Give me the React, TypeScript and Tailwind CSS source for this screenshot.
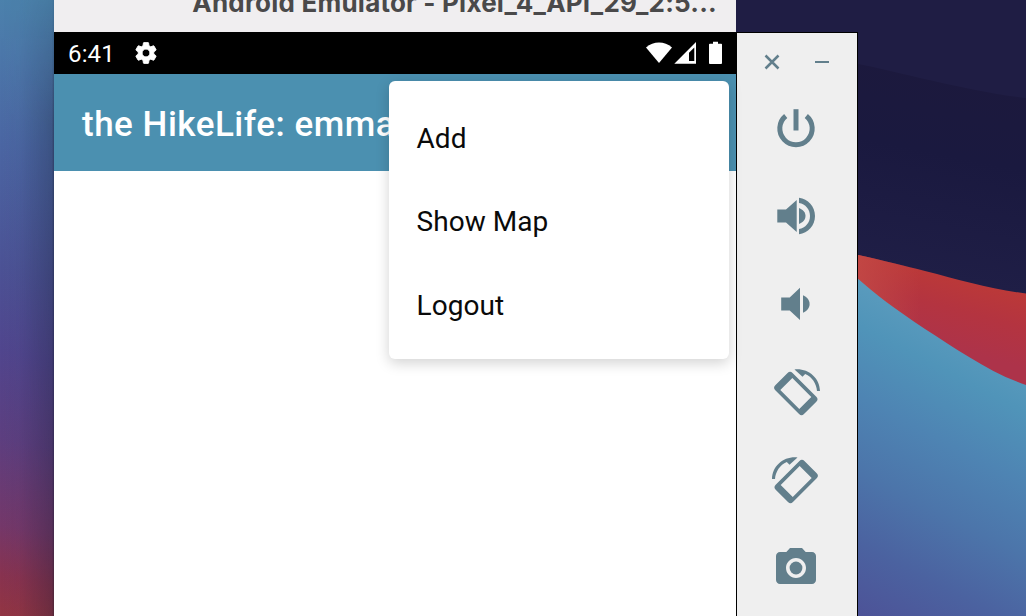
import React from "react";

function Wallpaper() {
  return (
    <svg className="absolute inset-0 h-full w-full" viewBox="0 0 1026 616" preserveAspectRatio="none" aria-hidden="true">
      <defs>
        <linearGradient id="left" gradientUnits="userSpaceOnUse" x1="60" y1="0" x2="-60" y2="600">
          <stop offset="0" stopColor="#4b83ac" />
          <stop offset="0.1" stopColor="#4c78aa" />
          <stop offset="0.25" stopColor="#4b66a3" />
          <stop offset="0.45" stopColor="#4c5295" />
          <stop offset="0.58" stopColor="#51468e" />
          <stop offset="0.72" stopColor="#5d3f80" />
          <stop offset="0.86" stopColor="#74386a" />
          <stop offset="0.94" stopColor="#883350" />
          <stop offset="1" stopColor="#923544" />
        </linearGradient>
        <linearGradient id="edge" x1="0" y1="0" x2="1" y2="0">
          <stop offset="0" stopColor="#101828" stopOpacity="0" />
          <stop offset="0.35" stopColor="#101828" stopOpacity="0.03" />
          <stop offset="0.96" stopColor="#101828" stopOpacity="0.27" />
          <stop offset="1" stopColor="#101828" stopOpacity="0.5" />
        </linearGradient>
        <linearGradient id="edgeTop" x1="0" y1="0" x2="0" y2="1">
          <stop offset="0" stopColor="#fff" stopOpacity="0.3" />
          <stop offset="0.2" stopColor="#fff" stopOpacity="0.95" />
          <stop offset="1" stopColor="#fff" />
        </linearGradient>
        <mask id="edgeMask">
          <rect width="54" height="616" fill="url(#edgeTop)" />
        </mask>
        <linearGradient id="navy" gradientUnits="userSpaceOnUse" x1="890" y1="60" x2="850" y2="260">
          <stop offset="0" stopColor="#1c193d" />
          <stop offset="0.4" stopColor="#1a193f" />
          <stop offset="1" stopColor="#1f1e46" />
        </linearGradient>
        <linearGradient id="red" gradientUnits="userSpaceOnUse" x1="955" y1="268" x2="935" y2="345">
          <stop offset="0" stopColor="#bd3a36" />
          <stop offset="0.5" stopColor="#b43440" />
          <stop offset="1" stopColor="#ad334a" />
        </linearGradient>
        <linearGradient id="redFade" gradientUnits="userSpaceOnUse" x1="858" y1="0" x2="920" y2="0">
          <stop offset="0" stopColor="#c44a46" stopOpacity="0.8" />
          <stop offset="1" stopColor="#c44a46" stopOpacity="0" />
        </linearGradient>
        <linearGradient id="blue" gradientUnits="userSpaceOnUse" x1="860" y1="278" x2="720" y2="547">
          <stop offset="0" stopColor="#5a9bbd" />
          <stop offset="0.14" stopColor="#5094b9" />
          <stop offset="0.35" stopColor="#4e84b3" />
          <stop offset="0.56" stopColor="#4c75aa" />
          <stop offset="0.78" stopColor="#4b62a0" />
          <stop offset="1" stopColor="#4d5297" />
        </linearGradient>
      </defs>
      <rect width="54" height="616" fill="url(#left)" />
      <rect width="54" height="616" fill="url(#edge)" mask="url(#edgeMask)" />
      <rect x="730" width="296" height="616" fill="#1f1d44" />
      <path d="M730 45C800 55 830 60 858 64C900 72 970 92 1026 98V300H730Z" fill="url(#navy)" />
      <path d="M856 254.500C885 261 905 266 925 271C960 280 990 289 1026 293.500V400H856Z" fill="url(#red)" />
      <path d="M856 254.500C885 261 905 266 925 271V340H856Z" fill="url(#redFade)" />
      <path d="M856 277C875 294 895 309 925 329C955 348 990 373 1026 385V616H856Z" fill="url(#blue)" />
    </svg>
  );
}

function GearIcon() {
  return (
    <svg className="size-[26px]" viewBox="0 0 24 24" fill="#fff">
      <path d="M19.140 12.940c.04-.3.060-.610.060-.940 0-.320-.020-.640-.070-.940l2.030-1.580c.180-.140.230-.410.120-.610l-1.920-3.320c-.120-.220-.370-.290-.590-.220l-2.390.960c-.500-.380-1.030-.700-1.620-.940l-.360-2.540c-.040-.240-.240-.410-.480-.410h-3.840c-.240 0-.430.170-.470.410l-.360 2.540c-.590.240-1.130.570-1.620.940l-2.390-.960c-.220-.080-.470 0-.590.220L2.740 8.870c-.120.210-.080.470.120.610l2.030 1.580c-.050.300-.090.630-.090.940s.020.640.070.940l-2.030 1.580c-.180.140-.230.410-.120.610l1.920 3.320c.120.220.370.290.590.220l2.390-.960c.500.380 1.030.700 1.620.940l.360 2.540c.050.240.240.410.480.410h3.840c.240 0 .440-.170.470-.410l.360-2.540c.590-.240 1.130-.560 1.620-.940l2.390.960c.220.080.470 0 .590-.220l1.920-3.320c.120-.220.070-.470-.120-.610l-2.010-1.580zM12 15.600c-1.980 0-3.600-1.620-3.600-3.600s1.620-3.600 3.600-3.600 3.600 1.620 3.600 3.600-1.620 3.600-3.600 3.600z" stroke="#fff" strokeWidth="0.800" strokeLinejoin="round" />
    </svg>
  );
}

function StatusIcons() {
  return (
    <svg className="h-6 w-[78px]" viewBox="0 0 78 24" fill="#fff">
      <path d="M0 6.500C7.500-.3 18.500-.3 26 6.500L13 22Z" />
      <path fillRule="evenodd" d="M50 1V22.700H28.300ZM48.300 6.500L43 11.800V20H48.300Z" />
      <path d="M67 .7h5v2h3.200c.6 0 .8.300.8.900v18.400c0 .6-.3.900-.9.900H63.900c-.6 0-.9-.3-.9-.9V3.600c0-.6.3-.9.900-.9H67Z" />
    </svg>
  );
}

const menuItems = ["Add", "Show Map", "Logout"];

function EmulatorWindow() {
  return (
    <main className="flex h-full w-[682px] shrink-0 flex-col bg-white">
      <div className="flex h-8 shrink-0 items-end justify-end overflow-hidden bg-[#f0eef0] pr-[19px]">
        <span className="pb-[13px] font-[Inter,sans-serif] text-[26px] leading-8 font-bold tracking-[0.22px] whitespace-nowrap text-[#4a494a]">
          Android Emulator - Pixel_4_API_29_2:5...
        </span>
      </div>
      <div className="flex h-[42px] shrink-0 items-center bg-black pr-3 pl-[14px] text-white">
        <span className="w-[65px] pt-[2px] text-[24px] leading-none tracking-[0.15px]">6:41</span>
        <GearIcon />
        <div className="ml-auto">
          <StatusIcons />
        </div>
      </div>
      <header className="relative flex h-[97px] shrink-0 items-center bg-[#4b90b0] pl-7">
        <h1 className="pt-[5px] text-[35px] font-medium tracking-[0.5px] whitespace-nowrap text-white">the HikeLife: emma</h1>
        <nav className="absolute top-[7px] right-[7px] flex h-[278px] w-[340px] flex-col rounded-[6px] bg-white py-[14px] shadow-[0_4px_14px_rgba(0,0,0,0.18)]">
          {menuItems.map((item) => (
            <button key={item} className="flex h-[83.500px] shrink-0 items-center px-[27.500px] pt-[4px] text-left text-[28px] tracking-[0.05px] text-[#0a0a0a]">
              {item}
            </button>
          ))}
        </nav>
      </header>
    </main>
  );
}

function PowerIcon() {
  return (
    <svg className="size-[50px]" viewBox="0 0 50 50" fill="none" stroke="currentColor" strokeWidth="5">
      <path d="M25 6.200V27.500" />
      <path d="M14.700 13A16.200 16.200 0 1 0 35.300 13" />
    </svg>
  );
}

function VolumeUpIcon() {
  return (
    <svg className="size-[50px]" viewBox="0 0 50 50" fill="currentColor">
      <path d="M6.300 18.500H15L25.700 9V41L15 31.500H6.300Z" />
      <path d="M28 17C32 18.500 34.500 21.500 34.500 25S32 31.500 28 33Z" />
      <path d="M28 6.700C37 7.700 44 15.500 44 25S37 42.300 28 43.300V38C34.500 37 39 31.500 39 25S34.500 13 28 12Z" />
    </svg>
  );
}

function VolumeDownIcon() {
  return (
    <svg className="size-[50px]" viewBox="0 0 50 50" fill="currentColor">
      <path d="M10.200 18.500H18.700L29 8.700V41L18.700 31.500H10.200Z" />
      <path d="M32 16.300C36 18 38.600 21 38.600 25S36 32 32 33.700Z" />
    </svg>
  );
}

function RotateIcon({ flip = false }: { flip?: boolean }) {
  return (
    <svg className={flip ? "size-[50px] -scale-x-100" : "size-[50px]"} viewBox="0 0 50 50" fill="currentColor">
      <path
        fillRule="evenodd"
        transform="translate(24.800 26.500) rotate(45)"
        d="M-16.800-12.200H16.800Q20.300-12.200 20.300-8.700V8.700Q20.300 12.200 16.800 12.200H-16.800Q-20.300 12.200-20.300 8.700V-8.700Q-20.300-12.200-16.800-12.200ZM-13.400-8.500V8.500H13.400V-8.500Z"
      />
      <path d="M23.500 2.400C37 1 48.700 10.500 49 24H46C45.500 16.500 41 9.700 34.200 6.900L31.500 9.700Z" />
    </svg>
  );
}

function CameraIcon() {
  return (
    <svg className="size-12" viewBox="0 0 24 24" fill="currentColor">
      <circle cx="12" cy="12" r="3.200" />
      <path d="M9 2L7.170 4H4c-1.100 0-2 .9-2 2v12c0 1.100.9 2 2 2h16c1.100 0 2-.9 2-2V6c0-1.100-.9-2-2-2h-3.170L15 2H9zm3 15c-2.760 0-5-2.240-5-5s2.240-5 5-5 5 2.240 5 5-2.240 5-5 5z" />
    </svg>
  );
}

function Toolbar() {
  const tools = [
    { name: "Power", icon: <PowerIcon /> },
    { name: "Volume up", icon: <VolumeUpIcon /> },
    { name: "Volume down", icon: <VolumeDownIcon /> },
    { name: "Rotate left", icon: <RotateIcon /> },
    { name: "Rotate right", icon: <RotateIcon flip /> },
    { name: "Camera", icon: <CameraIcon /> },
  ];
  return (
    <aside className="mt-8 flex w-[122px] shrink-0 flex-col border-x border-t border-black bg-[#efefef] text-[#627f8c]">
      <div className="flex h-[51px] shrink-0 items-start justify-between px-[27px] pt-[21px]">
        <svg className="size-4" viewBox="0 0 16 16" stroke="currentColor" strokeWidth="2.500">
          <path d="M1.500 1.500L14.500 14.500M14.500 1.500L1.500 14.500" />
        </svg>
        <svg className="size-4" viewBox="0 0 16 16">
          <path d="M1 7H15V9H1Z" fill="currentColor" />
        </svg>
      </div>
      {tools.map((tool) => (
        <button key={tool.name} aria-label={tool.name} className="flex h-[88px] w-[118px] shrink-0 items-center justify-center">
          {tool.icon}
        </button>
      ))}
    </aside>
  );
}

export default function App() {
  return (
    <div className="relative h-[616px] w-[1026px] overflow-hidden font-[Roboto,sans-serif]">
      <Wallpaper />
      <div className="relative flex h-full pl-[54px]">
        <EmulatorWindow />
        <Toolbar />
      </div>
    </div>
  );
}
